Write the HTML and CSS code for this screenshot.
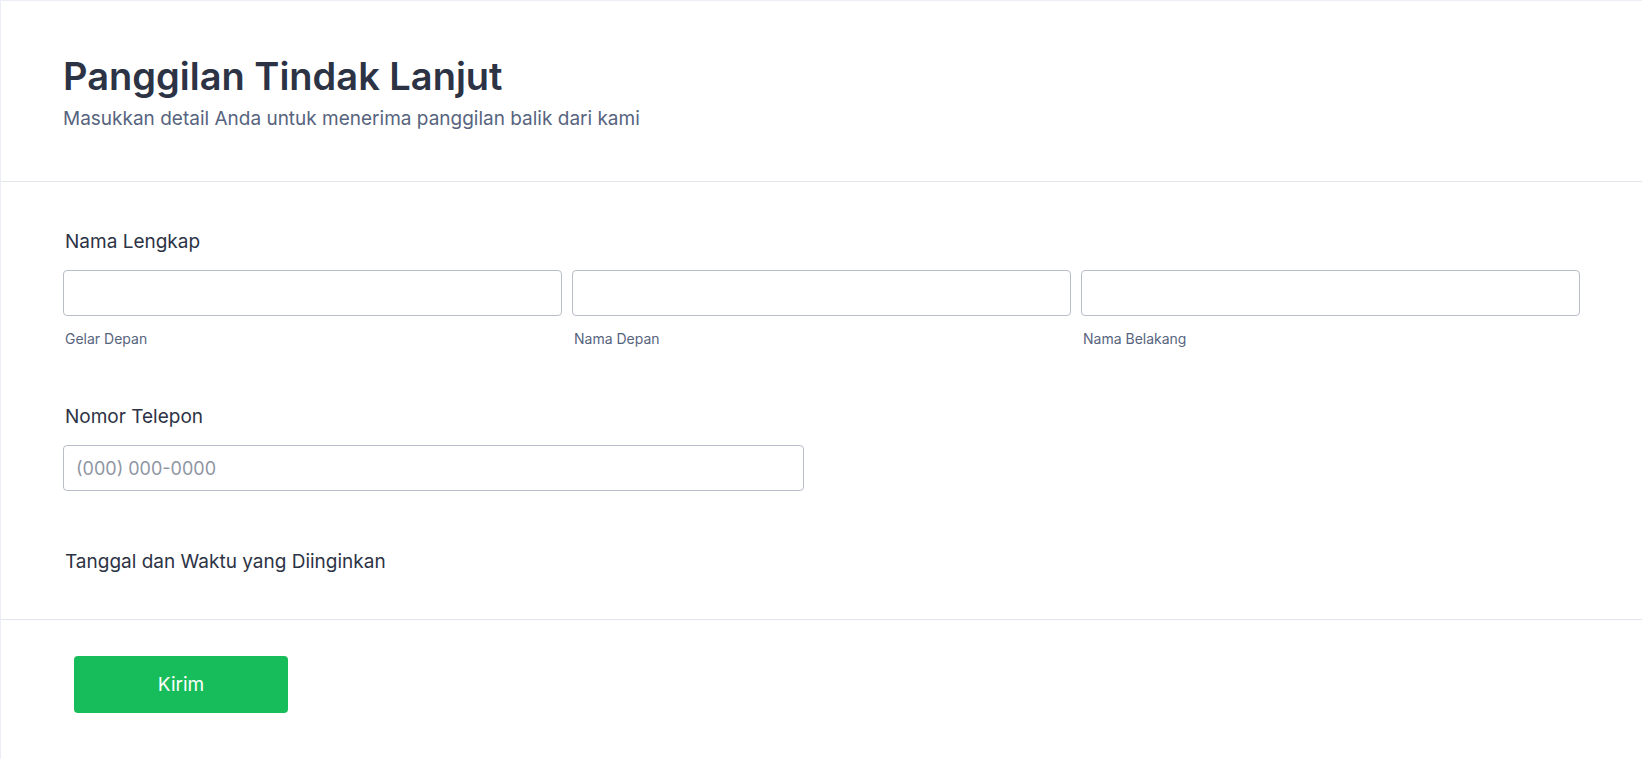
FILE: index.html
```html
<!DOCTYPE html>
<html>
<head>
    <title>Panggilan Tindak Lanjut</title>
    <link rel="stylesheet" href="styles.css">
</head>
<body>
    <form class="form" action="#" method="post">
        <div class="form-header">
            <h1>Panggilan Tindak Lanjut</h1>
            <p>Masukkan detail Anda untuk menerima panggilan balik dari kami</p>
        </div>
        <div class="form-body">
            <div class="field">
                <label class="field-label">Nama Lengkap</label>
                <div class="name-row">
                    <div class="name-col">
                        <input type="text" name="prefix">
                        <span class="sublabel">Gelar Depan</span>
                    </div>
                    <div class="name-col">
                        <input type="text" name="first">
                        <span class="sublabel">Nama Depan</span>
                    </div>
                    <div class="name-col">
                        <input type="text" name="last">
                        <span class="sublabel">Nama Belakang</span>
                    </div>
                </div>
            </div>
            <div class="field">
                <label class="field-label">Nomor Telepon</label>
                <input type="tel" name="phone" class="phone" placeholder="(000) 000-0000">
            </div>
            <div class="field last">
                <label class="field-label">Tanggal dan Waktu yang Diinginkan</label>
            </div>
        </div>
        <div class="form-footer">
            <button type="submit" class="submit">Kirim</button>
        </div>
    </form>
</body>
</html>
```

FILE: styles.css
```css
body {
    margin: 0;
    padding: 0;
    background-color: #ffffff;
    font-family: 'Inter', 'Noto Sans', sans-serif;
    color: #2c3345;
}
.form {
    border-left: 1px solid #eceef6;
    border-top: 1px solid #eceef6;
    min-height: 758px;
}
.form-header {
    padding: 52px 62px 48px;
    border-bottom: 1px solid #e3e5ec;
}
.form-header h1 {
    font-size: 38px;
    font-weight: 600;
    line-height: 46px;
    margin: 0;
    color: #2c3345;
}
.form-header p {
    font-size: 19px;
    line-height: 28px;
    margin: 6px 0 0;
    color: #57647e;
}
.form-body {
    padding: 48px 62px 0;
}
.field {
    margin-bottom: 57px;
}
.field.last {
    margin-bottom: 0;
    padding-top: 2px;
    padding-bottom: 29px;
}
.field-label {
    display: block;
    font-size: 19px;
    line-height: 24px;
    margin-bottom: 16px;
    padding-left: 2px;
    color: #2c3345;
}
.name-row {
    display: grid;
    grid-template-columns: 1fr 1fr 1fr;
    gap: 10px;
}
.name-col {
    display: flex;
    flex-direction: column;
}
input {
    display: block;
    box-sizing: border-box;
    height: 46px;
    border: 1px solid #b8bdc9;
    border-radius: 4px;
    padding: 0 12px;
    font-family: 'Inter', 'Noto Sans', sans-serif;
    font-size: 18px;
    color: #2c3345;
    background-color: #ffffff;
    width: 100%;
}
input::placeholder {
    color: #8f96a3;
}
.sublabel {
    font-size: 14px;
    line-height: 18px;
    margin-top: 14px;
    padding-left: 2px;
    color: #57647e;
}
.phone {
    width: 741px;
}
.form-footer {
    border-top: 1px solid #e3e5ec;
    padding: 36px 73px;
}
.submit {
    width: 214px;
    height: 57px;
    border: none;
    border-radius: 4px;
    background-color: #18bd5b;
    color: #ffffff;
    font-family: 'Inter', 'Noto Sans', sans-serif;
    font-size: 19px;
    cursor: pointer;
}
```
